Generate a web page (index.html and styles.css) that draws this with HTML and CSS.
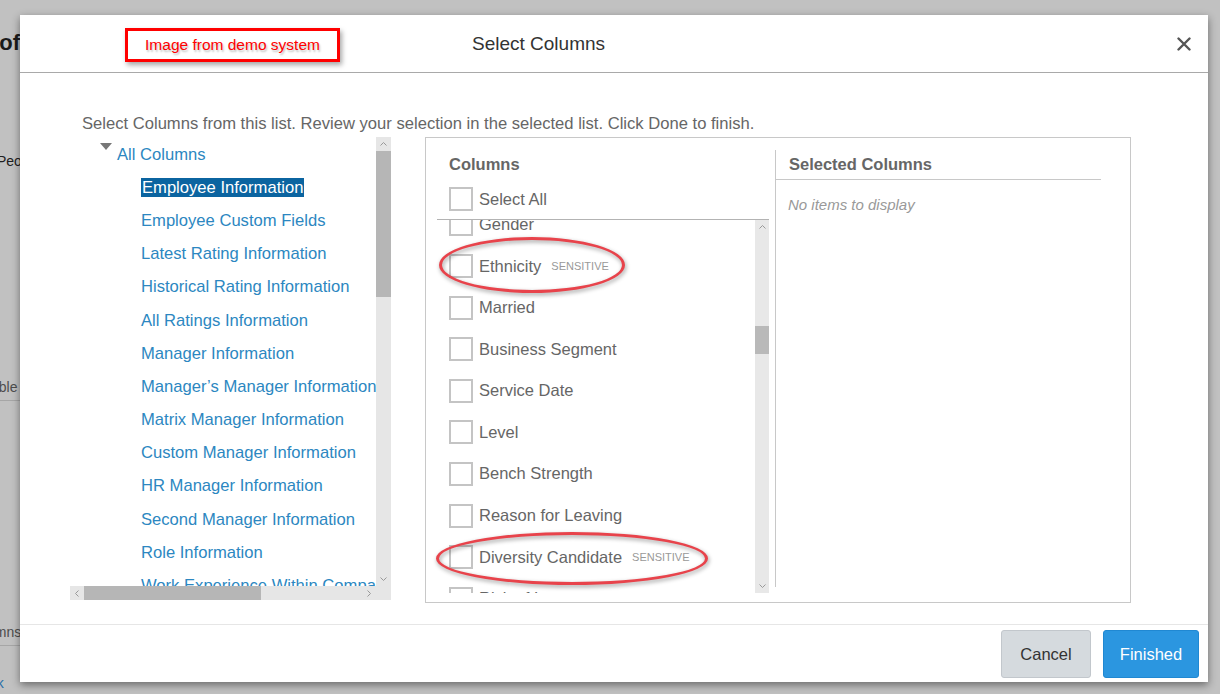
FILE: index.html
```html
<!DOCTYPE html>
<html lang="en">

<head>
    <meta charset="UTF-8">
    <meta name="viewport" content="width=device-width, initial-scale=1.0">
    <title>Select Columns</title>
    <link rel="stylesheet" href="styles.css">
</head>

<body>
    <div class="page">
        <h1 class="page_title">Profile</h1>
        <div class="page_people">People</div>
        <div class="page_table">Table</div>
        <div class="page_cols">Columns</div>
        <div class="page_link">Link</div>
    </div>

    <div class="modal">
        <div class="modal_header">
            <h2 class="modal_title">Select Columns</h2>
            <button class="close" title="Close">
                <svg width="14" height="14" viewBox="0 0 14 14">
                    <path d="M1.5 1.5 L12.5 12.5 M12.5 1.5 L1.5 12.5" stroke="#555" stroke-width="2.4" stroke-linecap="round" />
                </svg>
            </button>
        </div>

        <div class="modal_body">
            <p class="hint">Select Columns from this list. Review your selection in the selected list. Click Done to finish.</p>
            <div class="pickers">
                <div class="tree">
                    <div class="tree_view">
                        <div class="tree_root"><span class="caret"></span>All Columns</div>
                        <div class="tree_item"><span class="selected">Employee Information</span></div>
                        <div class="tree_item">Employee Custom Fields</div>
                        <div class="tree_item">Latest Rating Information</div>
                        <div class="tree_item">Historical Rating Information</div>
                        <div class="tree_item">All Ratings Information</div>
                        <div class="tree_item">Manager Information</div>
                        <div class="tree_item">Manager’s Manager Information</div>
                        <div class="tree_item">Matrix Manager Information</div>
                        <div class="tree_item">Custom Manager Information</div>
                        <div class="tree_item">HR Manager Information</div>
                        <div class="tree_item">Second Manager Information</div>
                        <div class="tree_item">Role Information</div>
                        <div class="tree_item">Work Experience Within Company</div>
                    </div>
                    <div class="vbar">
                        <div class="arrow"><svg width="7" height="4"><polyline points="0.5,3.5 3.5,0.5 6.5,3.5" fill="none" stroke="#999" /></svg></div>
                        <div class="thumb tree_thumb"></div>
                        <div class="track"></div>
                        <div class="arrow"><svg width="7" height="4"><polyline points="0.5,0.5 3.5,3.5 6.5,0.5" fill="none" stroke="#999" /></svg></div>
                    </div>
                    <div class="hbar">
                        <div class="arrow"><svg width="4" height="7"><polyline points="3.5,0.5 0.5,3.5 3.5,6.5" fill="none" stroke="#999" /></svg></div>
                        <div class="thumb"></div>
                        <div class="track"></div>
                        <div class="arrow"><svg width="4" height="7"><polyline points="0.5,0.5 3.5,3.5 0.5,6.5" fill="none" stroke="#999" /></svg></div>
                    </div>
                    <div class="corner"></div>
                </div>

                <div class="columns_box">
                    <div class="col_panel">
                        <div class="panel_head">Columns</div>
                        <div class="check_row select_all"><span class="box"></span>Select All</div>
                        <div class="col_list">
                            <div class="col_items">
                                <div class="col_scroll">
                                    <div class="check_row"><span class="box"></span>Gender</div>
                                    <div class="check_row"><span class="box"></span>Ethnicity<span class="tag">SENSITIVE</span></div>
                                    <div class="check_row"><span class="box"></span>Married</div>
                                    <div class="check_row"><span class="box"></span>Business Segment</div>
                                    <div class="check_row"><span class="box"></span>Service Date</div>
                                    <div class="check_row"><span class="box"></span>Level</div>
                                    <div class="check_row"><span class="box"></span>Bench Strength</div>
                                    <div class="check_row"><span class="box"></span>Reason for Leaving</div>
                                    <div class="check_row"><span class="box"></span>Diversity Candidate<span class="tag">SENSITIVE</span></div>
                                    <div class="check_row"><span class="box"></span>Risk of Loss</div>
                                    <div class="check_row"><span class="box"></span>Impact of Loss</div>
                                </div>
                            </div>
                            <div class="vbar slim">
                                <div class="arrow"><svg width="7" height="4"><polyline points="0.5,3.5 3.5,0.5 6.5,3.5" fill="none" stroke="#999" /></svg></div>
                                <div class="track list_gap"></div>
                                <div class="thumb list_thumb"></div>
                                <div class="track"></div>
                                <div class="arrow"><svg width="7" height="4"><polyline points="0.5,0.5 3.5,3.5 6.5,0.5" fill="none" stroke="#999" /></svg></div>
                            </div>
                        </div>
                    </div>
                    <div class="sel_panel">
                        <div class="panel_head">Selected Columns</div>
                        <div class="empty">No items to display</div>
                    </div>
                </div>
            </div>
        </div>

        <div class="modal_footer">
            <button class="btn cancel">Cancel</button>
            <button class="btn finished">Finished</button>
        </div>

        <!-- annotations pasted over the screenshot -->
        <div class="demo_label">Image from demo system</div>
        <div class="mark mark_eth"></div>
        <div class="mark mark_div"></div>
    </div>
</body>

</html>
```

FILE: styles.css
```css
html, body {
    margin: 0;
    padding: 0;
}

body {
    width: 1220px;
    height: 694px;
    overflow: hidden;
    position: relative;
    background-color: #c1c1c1;
    font-family: "Liberation Sans", Arial, sans-serif;
}

/* page behind the dialog */
.page {
    width: 120px;
}

.page_title {
    margin: 30px 0 0 -24px;
    font-size: 22px;
    line-height: 26px;
    font-weight: bold;
    color: #1b1b1b;
}

.page_people {
    margin: 97px 0 0 -3px;
    font-size: 14px;
    line-height: 16px;
    color: #202020;
}

.page_table, .page_cols {
    font-size: 14px;
    line-height: 16px;
    color: #4d4d4d;
    padding-bottom: 5px;
    border-bottom: 1px solid #a6a6a6;
}

.page_table {
    margin: 210px 0 0 -16px;
}

.page_cols {
    margin: 223px 0 0 -34px;
}

.page_link {
    margin: 29px 0 0 -22px;
    font-size: 14px;
    line-height: 16px;
    color: #2a6fa8;
}

/* dialog */
.modal {
    position: absolute;
    left: 20px;
    top: 15px;
    width: 1188px;
    height: 667px;
    display: flex;
    flex-direction: column;
    background-color: #fff;
    box-shadow: 0 3px 8px rgba(0, 0, 0, .45);
}

.modal_header {
    height: 57px;
    display: flex;
    align-items: center;
    padding: 0 17px 0 452px;
    border-bottom: 1px solid #a9a9a9;
}

.modal_title {
    flex: 1;
    margin: 0;
    font-size: 19px;
    font-weight: normal;
    color: #333;
}

.close {
    display: flex;
    width: 14px;
    height: 14px;
    padding: 0;
    border: 0;
    background: none;
    cursor: pointer;
}

.modal_body {
    flex: 1;
    padding: 42px 0 0 50px;
}

.hint {
    margin: 0 0 4px 12px;
    font-size: 16.6px;
    line-height: 18px;
    color: #666;
}

.pickers {
    display: flex;
    align-items: flex-start;
}

/* left tree */
.tree {
    width: 321px;
    height: 463px;
    display: grid;
    grid-template-columns: 1fr 15px;
    grid-template-rows: 1fr 14px;
}

.tree_view {
    overflow: hidden;
    white-space: nowrap;
}

.tree_root, .tree_item {
    height: 33.2px;
    line-height: 33.2px;
    font-size: 16.6px;
    color: #2c87c1;
}

.tree_root {
    display: flex;
    padding-left: 30px;
    margin-top: 0.6px;
}

.caret {
    margin: 5px 5px 0 0;
    width: 0;
    height: 0;
    border-left: 6.5px solid transparent;
    border-right: 6.5px solid transparent;
    border-top: 7px solid #777;
}

.tree_item {
    padding-left: 71px;
}

.selected {
    padding: 0 1px;
    background-color: #0b64a0;
    color: #fff;
}

/* fake scrollbars */
.vbar, .hbar, .corner {
    background-color: #e6e6e6;
}

.vbar {
    display: flex;
    flex-direction: column;
}

.hbar {
    display: flex;
}

.vbar .arrow {
    height: 14px;
    display: flex;
    align-items: center;
    justify-content: center;
}

.hbar .arrow {
    width: 14px;
    display: flex;
    align-items: center;
    justify-content: center;
}

.thumb {
    background-color: #b6b6b6;
}

.track {
    flex: 1;
}

.tree_thumb {
    height: 146px;
}

.hbar .thumb {
    width: 177px;
}

/* columns box */
.columns_box {
    margin-left: 34px;
    width: 706px;
    height: 466px;
    box-sizing: border-box;
    display: flex;
    align-items: flex-start;
    padding: 12px 29px 0 11px;
    border: 1px solid #c8c8c8;
}

.col_panel {
    width: 332px;
    height: 443px;
    display: flex;
    flex-direction: column;
}

.panel_head {
    height: 29px;
    line-height: 29px;
    padding-left: 12px;
    font-size: 16.5px;
    font-weight: bold;
    color: #666;
}

.check_row {
    height: 41.6px;
    flex-shrink: 0;
    display: flex;
    align-items: center;
    padding-left: 12px;
    font-size: 16.5px;
    color: #666;
    white-space: nowrap;
}

.check_row.select_all {
    height: 40px;
    border-bottom: 1px solid #b3b3b3;
}

.box {
    width: 24px;
    height: 24px;
    box-sizing: border-box;
    margin-right: 6px;
    border: 2px solid #c4c4c4;
    background-color: #fff;
}

.tag {
    margin-left: 10px;
    font-size: 11px;
    color: #999;
}

.col_list {
    flex: 1;
    display: flex;
    min-height: 0;
}

.col_items {
    flex: 1;
    overflow: hidden;
}

.col_scroll {
    margin-top: -16.4px;
}

.vbar.slim {
    width: 14px;
    background-color: #e8e8e8;
}

.list_gap {
    flex: 0 0 92px;
}

.list_thumb {
    height: 28px;
    background-color: #b9b9b9;
}

.sel_panel {
    flex: 1;
    height: 437px;
    margin-left: 6px;
    border-left: 1px solid #c8c8c8;
}

.sel_panel .panel_head {
    padding-left: 13px;
    border-bottom: 1px solid #c8c8c8;
}

.empty {
    margin-top: 16px;
    padding-left: 12px;
    font-size: 15px;
    line-height: 18px;
    font-style: italic;
    color: #999;
}

/* footer */
.modal_footer {
    display: flex;
    justify-content: flex-end;
    gap: 12px;
    padding: 5px 9px 4px;
    border-top: 1px solid #e6e6e6;
}

.btn {
    height: 48px;
    padding: 0;
    border-radius: 3px;
    font-family: inherit;
    font-size: 16.5px;
    cursor: pointer;
}

.cancel {
    width: 90px;
    background-color: #d5dade;
    border: 1px solid #c2c7cc;
    color: #333;
}

.finished {
    width: 96px;
    background-color: #2b96e0;
    border: 1px solid #2088d2;
    color: #fff;
}

/* annotations */
.demo_label {
    position: absolute;
    left: 105px;
    top: 13px;
    width: 215px;
    height: 34px;
    box-sizing: border-box;
    display: flex;
    align-items: center;
    justify-content: center;
    border: 3px solid #f00;
    font-size: 15.5px;
    color: #f00;
    box-shadow: 2px 3px 5px rgba(0, 0, 0, .35);
    text-shadow: 1px 2px 2px rgba(0, 0, 0, .25);
}

.mark {
    position: absolute;
    box-sizing: border-box;
    border: 3px solid #e8434b;
    border-radius: 50%;
    filter: drop-shadow(1px 2px 2px rgba(0, 0, 0, .4));
}

.mark_eth {
    left: 419px;
    top: 222px;
    width: 186px;
    height: 56px;
}

.mark_div {
    left: 416px;
    top: 517px;
    width: 272px;
    height: 53px;
}
```
